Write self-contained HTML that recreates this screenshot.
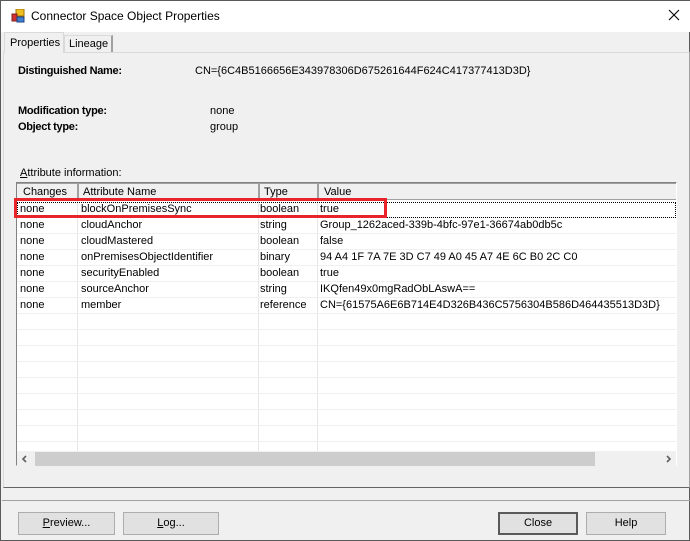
<!DOCTYPE html>
<html><head><style>
*{margin:0;padding:0;box-sizing:border-box}
body{width:690px;height:541px;background:#f0f0f0;font-family:"Liberation Sans",sans-serif;font-size:11px;color:#000;position:relative;overflow:hidden;border:1px solid #5a5a5a}
.a{position:absolute;white-space:nowrap}
.b{font-weight:bold;letter-spacing:-0.3px}
.btn{position:absolute;height:23px;border:1px solid #adadad;background:#e1e1e1;text-align:center;line-height:21px;font-size:11px}
.row{position:absolute;left:16px;width:659px;height:16px;border-bottom:1px solid #f0f0f0}
.row span{position:absolute;top:1px}
</style></head><body>
<div class="a" style="left:0;top:0;width:690px;height:31px;background:#fff"></div>
<svg class="a" style="left:10px;top:8px" width="14" height="14"><rect x="5" y="0" width="8" height="7" fill="#f0c020" stroke="#a07000"/><rect x="1" y="5" width="5" height="7" fill="#d03030" stroke="#802020"/><rect x="6" y="8" width="7" height="5" fill="#4080d0" stroke="#204080"/></svg>
<div class="a" style="left:30px;top:8px;font-size:12px">Connector Space Object Properties</div>
<svg class="a" style="left:667px;top:8px" width="12" height="12"><path d="M1 1L11 11M11 1L1 11" stroke="#000" stroke-width="1.1"/></svg>
<div class="a" style="left:2px;top:51px;width:687px;height:436px;border:1px solid #d9d9d9;border-right-color:#a0a0a0;border-bottom:1px solid #646464;background:#f0f0f0"></div>
<div class="a" style="left:3px;top:31px;width:60px;height:21px;background:#f0f0f0;border:1px solid #d9d9d9;border-bottom:none;padding:4px 0 0 5px">Properties</div>
<div class="a" style="left:63px;top:34px;width:49px;height:17px;border:1px solid #d9d9d9;border-right:2px solid #a0a0a0;border-bottom:none;padding:2px 0 0 4px">Lineage</div>
<div class="a b" style="left:17px;top:64px">Distinguished Name:</div>
<div class="a" style="left:194px;top:64px">CN={6C4B5166656E343978306D675261644F624C417377413D3D}</div>
<div class="a b" style="left:17px;top:104px">Modification type:</div>
<div class="a" style="left:209px;top:104px">none</div>
<div class="a b" style="left:17px;top:120px">Object type:</div>
<div class="a" style="left:209px;top:120px">group</div>
<div class="a" style="left:19px;top:166px"><u>A</u>ttribute information:</div>
<div class="a" style="left:15px;top:181px;width:661px;height:284px;border:1px solid #828282;border-right-color:#fff;border-bottom-color:#fff;background:#fff"></div>
<div class="a" style="left:16px;top:182px;width:659px;height:17px;background:#f0f0f0;border-top:1px solid #a0a0a0;border-bottom:1px solid #a0a0a0"></div>
<div class="a" style="left:22px;top:185px">Changes</div>
<div class="a" style="left:82px;top:185px">Attribute Name</div>
<div class="a" style="left:263px;top:185px">Type</div>
<div class="a" style="left:323px;top:185px">Value</div>
<div class="a" style="left:76px;top:182px;width:1px;height:268px;background:#e6e6e6"></div>
<div class="a" style="left:257px;top:182px;width:1px;height:268px;background:#e6e6e6"></div>
<div class="a" style="left:316px;top:182px;width:1px;height:268px;background:#e6e6e6"></div>
<div class="a" style="left:76px;top:182px;width:2px;height:17px;background:#a0a0a0"></div>
<div class="a" style="left:257px;top:182px;width:2px;height:17px;background:#a0a0a0"></div>
<div class="a" style="left:316px;top:182px;width:2px;height:17px;background:#a0a0a0"></div>
<div class="row" style="top:201px;outline:1px dotted #000;outline-offset:-1px"><span style="left:3px">none</span><span style="left:64px">blockOnPremisesSync</span><span style="left:243px">boolean</span><span style="left:303px">true</span></div>
<div class="row" style="top:217px"><span style="left:3px">none</span><span style="left:64px">cloudAnchor</span><span style="left:243px">string</span><span style="left:303px">Group_1262aced-339b-4bfc-97e1-36674ab0db5c</span></div>
<div class="row" style="top:233px"><span style="left:3px">none</span><span style="left:64px">cloudMastered</span><span style="left:243px">boolean</span><span style="left:303px">false</span></div>
<div class="row" style="top:249px"><span style="left:3px">none</span><span style="left:64px">onPremisesObjectIdentifier</span><span style="left:243px">binary</span><span style="left:303px">94 A4 1F 7A 7E 3D C7 49 A0 45 A7 4E 6C B0 2C C0</span></div>
<div class="row" style="top:265px"><span style="left:3px">none</span><span style="left:64px">securityEnabled</span><span style="left:243px">boolean</span><span style="left:303px">true</span></div>
<div class="row" style="top:281px"><span style="left:3px">none</span><span style="left:64px">sourceAnchor</span><span style="left:243px">string</span><span style="left:303px">IKQfen49x0mgRadObLAswA==</span></div>
<div class="row" style="top:297px"><span style="left:3px">none</span><span style="left:64px">member</span><span style="left:243px">reference</span><span style="left:303px">CN={61575A6E6B714E4D326B436C5756304B586D464435513D3D}</span></div>
<div class="row" style="top:313px"></div><div class="row" style="top:329px"></div><div class="row" style="top:345px"></div><div class="row" style="top:361px"></div><div class="row" style="top:377px"></div><div class="row" style="top:393px"></div><div class="row" style="top:409px"></div><div class="row" style="top:425px"></div>
<div class="a" style="left:16px;top:450px;width:659px;height:15px;background:#f0f0f0"></div>
<div class="a" style="left:34px;top:451px;width:560px;height:14px;background:#cdcdcd"></div>
<svg class="a" style="left:20px;top:454px" width="8" height="8"><path d="M5 1L2 4L5 7" stroke="#606060" stroke-width="1.6" fill="none"/></svg>
<svg class="a" style="left:664px;top:454px" width="8" height="8"><path d="M2 1L5 4L2 7" stroke="#606060" stroke-width="1.6" fill="none"/></svg>
<div class="a" style="left:13px;top:197px;width:373px;height:20px;border:3px solid #e8232a"></div>
<div class="a" style="left:1px;top:499px;width:688px;height:1px;background:#a0a0a0"></div>
<div class="btn" style="left:17px;top:511px;width:97px"><u>P</u>review...</div>
<div class="btn" style="left:122px;top:511px;width:96px"><u>L</u>og...</div>
<div class="btn" style="left:497px;top:511px;width:80px;border:2px solid #5a5a5a;line-height:19px">Close</div>
<div class="btn" style="left:585px;top:511px;width:80px">Help</div>
</body></html>
